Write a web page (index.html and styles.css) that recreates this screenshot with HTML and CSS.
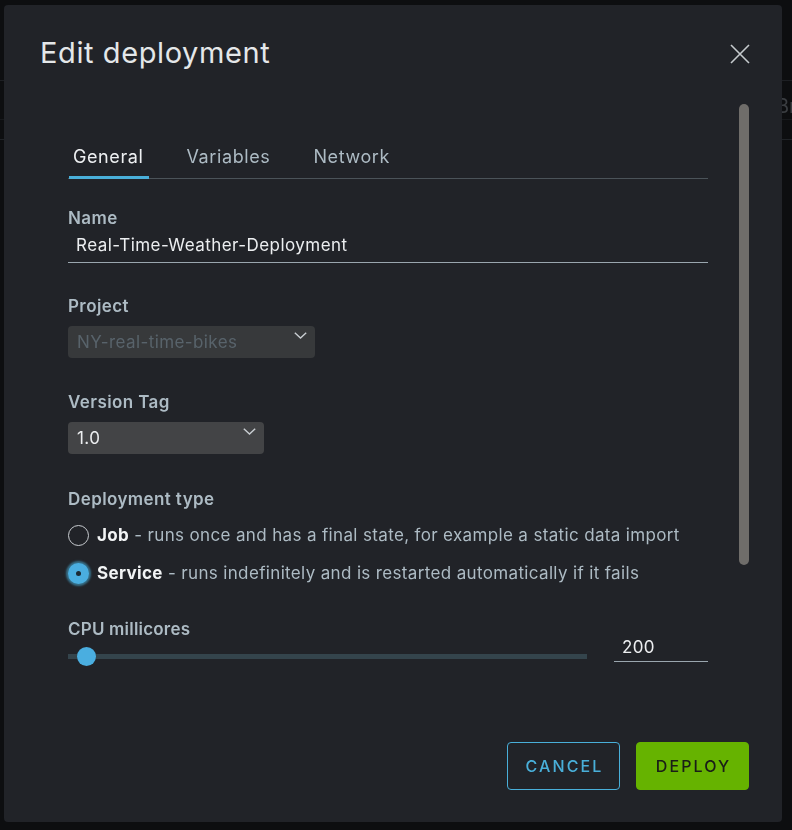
FILE: index.html
```html
<!DOCTYPE html>
<html lang="en">
<head>
<meta charset="utf-8">
<title>Edit deployment</title>
<link rel="stylesheet" href="styles.css">
</head>
<body>
<div class="backdrop">
  <div class="bd-line bd-line-a"></div>
  <div class="bd-line bd-line-b"></div>
  <div class="bd-line bd-line-c"></div>
  <span class="bd-text">Br</span>
</div>
<div class="modal">
  <div class="modal-header">
    <h1 class="modal-title">Edit deployment</h1>
    <button class="close-btn" aria-label="Close">
      <svg width="20" height="20" viewBox="0 0 20 20"><path d="M1 1 L19 19 M19 1 L1 19" stroke="#c5cacd" stroke-width="1.6" fill="none"/></svg>
    </button>
  </div>
  <div class="modal-body">
    <div class="content">
      <div class="tabs">
        <div class="tab active">General</div>
        <div class="tab">Variables</div>
        <div class="tab">Network</div>
      </div>

      <div class="label label-first">Name</div>
      <div class="text-input">Real-Time-Weather-Deployment</div>

      <div class="label label-project">Project</div>
      <div class="select select-disabled select-project">
        <span>NY-real-time-bikes</span>
        <svg class="chev" width="13" height="7" viewBox="0 0 13 7"><path d="M0.8 0.8 L6.5 6 L12.2 0.8" stroke="#c9ced2" stroke-width="1.4" fill="none"/></svg>
      </div>

      <div class="label label-version">Version Tag</div>
      <div class="select select-version">
        <span>1.0</span>
        <svg class="chev" width="13" height="7" viewBox="0 0 13 7"><path d="M0.8 0.8 L6.5 6 L12.2 0.8" stroke="#c9ced2" stroke-width="1.4" fill="none"/></svg>
      </div>

      <div class="label label-type">Deployment type</div>
      <div class="radios">
        <div class="radio-row">
          <span class="radio"></span>
          <span class="radio-text"><b>Job</b> - runs once and has a final state, for example a static data import</span>
        </div>
        <div class="radio-row">
          <span class="radio checked"></span>
          <span class="radio-text"><b>Service</b> - runs indefinitely and is restarted automatically if it fails</span>
        </div>
      </div>

      <div class="label label-cpu">CPU millicores</div>
      <div class="slider-row">
        <div class="slider"><span class="thumb"></span></div>
        <div class="num-input">200</div>
      </div>
    </div>
    <div class="scrollbar"><div class="scroll-thumb"></div></div>
  </div>
  <div class="modal-footer">
    <button class="btn btn-outline">CANCEL</button>
    <button class="btn btn-success">DEPLOY</button>
  </div>
</div>
</body>
</html>
```
FILE: styles.css
```css
* { box-sizing: border-box; }
html, body { margin: 0; padding: 0; }
body {
  background: #0d0e10;
  font-family: Inter, "Noto Sans", "Liberation Sans", sans-serif;
  color: #adbbc4;
  width: 792px;
  height: 830px;
  overflow: hidden;
  padding: 5px 10px 0 4px;
}
.backdrop {
  position: fixed;
  inset: 0;
  z-index: 0;
}
.bd-line { position: absolute; left: 0; right: 0; height: 1px; background: #1d1f23; }
.bd-line-a { top: 80px; }
.bd-line-b { top: 119px; background: #17191c; }
.bd-line-c { top: 139px; background: #202327; }
.bd-text {
  position: absolute;
  left: 776px;
  top: 94px;
  font-size: 20px;
  color: #3a3d41;
}
.modal {
  position: relative;
  z-index: 1;
  width: 778px;
  height: 817px;
  background: #212328;
  border-radius: 4px;
  display: flex;
  flex-direction: column;
}
.modal-header {
  display: flex;
  justify-content: space-between;
  align-items: flex-start;
  padding: 30px 33px 0 36px;
  height: 66px;
}
.modal-title {
  margin: 0;
  font-size: 29px;
  line-height: 36px;
  font-weight: 400;
  color: #e4e7e9;
  letter-spacing: 0.6px;
}
.close-btn {
  background: none;
  border: 0;
  padding: 0;
  margin-top: 9px;
  width: 20px;
  height: 20px;
  margin-right: -1px;
  cursor: pointer;
}
.close-btn svg { display: block; }
.modal-body {
  flex: 1;
  display: flex;
  padding-left: 64px;
  padding-right: 33px;
}
.content {
  width: 640px;
  margin-right: 31px;
  padding-top: 65px;
}
.scrollbar { width: 10px; padding-top: 33px; }
.scroll-thumb {
  width: 10px;
  height: 461px;
  border-radius: 5px;
  background: #6f6d6a;
}
.tabs {
  display: flex;
  gap: 34px;
  height: 43px;
  border-bottom: 1px solid #4b5359;
}
.tab {
  height: 42px;
  line-height: 42px;
  padding: 0 5px 0 4px;
  font-size: 18px;
  letter-spacing: 0.6px;
  color: #adbbc4;
}
.tab.active {
  color: #eef0f2;
  margin-left: 1px;
  box-shadow: inset 0 -3px 0 #49afd9;
  height: 43px;
}
.label {
  font-size: 17px;
  font-weight: 600;
  line-height: 24px;
  letter-spacing: 0.4px;
  color: #adbbc4;
}
.label-first { margin-top: 27px; }
.label-project { margin-top: 31px; }
.label-version { margin-top: 32px; }
.label-type { margin-top: 33px; }
.label-cpu { margin-top: 27px; line-height: 20px; letter-spacing: 0.2px; }
.text-input {
  margin-top: 3px;
  padding: 0 8px 5px 8px;
  line-height: 24px;
  font-size: 17px;
  letter-spacing: 0.45px;
  color: #eceef0;
  border-bottom: 1px solid #9aa6ae;
}
.select {
  margin-top: 8px;
  height: 32px;
  border-radius: 4px;
  background: #434446;
  display: flex;
  align-items: center;
  justify-content: space-between;
  padding: 0 8px 0 9px;
  font-size: 17px;
  letter-spacing: 0.4px;
  color: #eceef0;
}
.select .chev { align-self: flex-start; margin-top: 6px; }
.select-disabled { background: #37393b; color: #58636b; }
.select-project { width: 247px; }
.select-version { width: 196px; }
.radios { margin-top: 5px; }
.radio-row {
  display: flex;
  align-items: center;
  height: 38px;
  gap: 8px;
  font-size: 17px;
  letter-spacing: 0.35px;
}
.radio {
  width: 21px;
  height: 21px;
  border-radius: 50%;
  border: 1.5px solid #c8ccd0;
  flex: none;
  display: flex;
  align-items: center;
  justify-content: center;
}
.radio.checked {
  border: 0;
  background: #4aaee0;
  box-shadow: 0 0 2px 2px rgba(73, 175, 217, 0.55);
}
.radio.checked::after {
  content: "";
  width: 5px;
  height: 5px;
  border-radius: 50%;
  background: #1b2a33;
}
.radio-text { color: #adbbc4; white-space: nowrap; }
.radio-text b { color: #f2f4f5; font-weight: 700; }
.slider-row {
  display: flex;
  margin-top: -2px;
  gap: 27px;
}
.slider {
  position: relative;
  width: 519px;
  height: 5px;
  margin-top: 17px;
  background: #34444c;
}
.thumb {
  position: absolute;
  left: 9px;
  top: -7px;
  width: 19px;
  height: 19px;
  border-radius: 50%;
  background: #4aaee0;
}
.num-input {
  width: 94px;
  padding: 0 8px 4px 8px;
  line-height: 20px;
  font-size: 17px;
  letter-spacing: 0.3px;
  color: #eceef0;
  border-bottom: 1px solid #9aa6ae;
}
.modal-footer {
  display: flex;
  justify-content: flex-end;
  gap: 16px;
  padding: 0 33px 32px 0;
}
.btn {
  width: 113px;
  height: 48px;
  border-radius: 4px;
  font-family: Inter, "Noto Sans", "Liberation Sans", sans-serif;
  font-size: 16px;
  font-weight: 500;
  letter-spacing: 2.1px;
  padding: 0 0 0 2px;
  cursor: pointer;
}
.btn-outline {
  background: transparent;
  border: 1px solid #49afd9;
  color: #49afd9;
}
.btn-success {
  background: #66b300;
  border: 1px solid #66b300;
  color: #1a1d17;
}
```
